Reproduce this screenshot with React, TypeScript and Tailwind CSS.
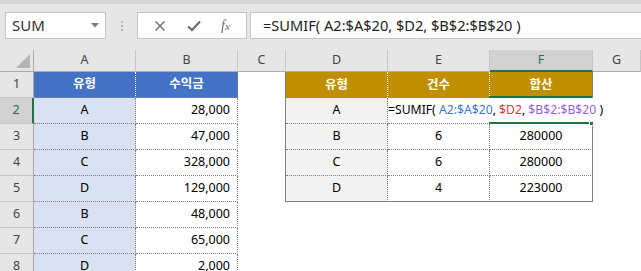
import React from 'react';

const FONT = { fontFamily: '"Noto Sans", "Noto Sans CJK KR", sans-serif' };

const colHeads = ['A', 'B', 'C', 'D', 'E', 'F', 'G'];

type Row = { a: string; b: string; d?: string; e?: string; f?: string };

const rows: Row[] = [
    { a: '유형', b: '수익금', d: '유형', e: '건수', f: '합산' },
    { a: 'A', b: '28,000', d: 'A', e: '', f: '' },
    { a: 'B', b: '47,000', d: 'B', e: '6', f: '280000' },
    { a: 'C', b: '328,000', d: 'C', e: '6', f: '280000' },
    { a: 'D', b: '129,000', d: 'D', e: '4', f: '223000' },
    { a: 'B', b: '48,000' },
    { a: 'C', b: '65,000' },
    { a: 'D', b: '2,000' },
];

const FxBar: React.FC = () => {
    return (
        <div className="h-[50px] bg-[#e6e6e6] border-t-[4px] border-[#d6d6d6] flex items-start pt-[8px]">
            {/* name box */}
            <div className="ml-[5px] w-[101px] h-[27px] bg-white border border-[#c6c6c6] flex items-center pl-[6px] pr-[6px]">
                <span className="text-[15px] text-[#333] flex-1">SUM</span>
                <svg width="8" height="5" viewBox="0 0 8 5">
                    <path d="M0 0 L8 0 L4 4.5 Z" fill="#7a7a7a" />
                </svg>
            </div>
            <div className="w-[31px] h-[27px] flex flex-col items-center justify-center gap-[2px]">
                <span className="w-[2px] h-[2px] bg-[#b5b5b5]" />
                <span className="w-[2px] h-[2px] bg-[#b5b5b5]" />
                <span className="w-[2px] h-[2px] bg-[#b5b5b5]" />
            </div>
            {/* x / check / fx */}
            <div className="w-[110px] h-[27px] bg-white border border-[#c6c6c6] flex items-center justify-around px-[6px]">
                <svg width="12" height="12" viewBox="0 0 12 12">
                    <path d="M1.5 1.5 L10.5 10.5 M10.5 1.5 L1.5 10.5" stroke="#6b6b6b" strokeWidth="1.4" />
                </svg>
                <svg width="14" height="12" viewBox="0 0 14 12">
                    <path d="M1 6.5 L5 10 L13 1.5" stroke="#6b6b6b" strokeWidth="2.2" fill="none" />
                </svg>
                <span className="text-[#6b6b6b] italic text-[14px] leading-none" style={{ fontFamily: '"Liberation Serif", serif' }}>
                    f<span className="text-[11px]">x</span>
                </span>
            </div>
            <div className="ml-[3px] flex-1 h-[27px] bg-white border border-[#c6c6c6] border-r-0 flex items-center pl-[12px]">
                <span className="text-[14.6px] text-[#222] whitespace-pre">=SUMIF( A2:$A$20, $D2, $B$2:$B$20 )</span>
            </div>
        </div>
    );
};

const Corner: React.FC = () => (
    <div className="bg-[#e6e6e6] border-r border-b border-[#ababab] flex items-end justify-end pr-[3px] pb-[3px]">
        <svg width="14" height="14" viewBox="0 0 14 14">
            <path d="M14 0 L14 14 L0 14 Z" fill="#b4b4b4" />
        </svg>
    </div>
);

const App: React.FC = () => {
    return (
        <div className="w-[641px] h-[271px] overflow-hidden bg-white relative" style={FONT}>
            <FxBar />

            <div className="grid grid-cols-[34px_102px_102px_48px_102px_102px_103px_1fr] grid-rows-[22px_repeat(8,26px)] text-[12.5px] text-black">
                {/* column headers */}
                <Corner />
                {colHeads.map((c) => (
                    <div
                        key={c}
                        className={
                            c === 'F'
                                ? 'bg-[#d2d2d2] text-[#217346] border-r border-[#c6c6c6] border-b-2 border-b-[#217346] flex items-center justify-center'
                                : 'bg-[#e6e6e6] text-[#444] border-r border-[#c6c6c6] border-b border-b-[#ababab] flex items-center justify-center'
                        }
                    >
                        {c}
                    </div>
                ))}

                {rows.map((r, i) => {
                    const n = i + 1;
                    const head = n === 1;
                    const inTable2 = n <= 5;
                    const last2 = n === 5;
                    return (
                        <React.Fragment key={n}>
                            <div
                                className={
                                    n === 2
                                        ? 'bg-[#d2d2d2] text-[#217346] border-b border-[#c6c6c6] border-r-2 border-r-[#217346] flex items-center justify-center'
                                        : 'bg-[#e6e6e6] text-[#444] border-b border-[#c6c6c6] border-r border-r-[#ababab] flex items-center justify-center'
                                }
                            >
                                {n}
                            </div>

                            {/* A */}
                            {head ? (
                                <div className="bg-[#4472c4] text-white font-bold border-r border-dotted border-r-white border-b border-b-[#8a8a8a] flex items-center justify-center">
                                    {r.a}
                                </div>
                            ) : (
                                <div className="bg-[#d9e1f2] border-r border-dotted border-r-[#7f7f7f] border-b border-b-[#7f7f7f] flex items-center justify-center">
                                    {r.a}
                                </div>
                            )}

                            {/* B */}
                            {head ? (
                                <div className="bg-[#4472c4] text-white font-bold border-r border-r-[#808080] border-b border-dotted border-b-[#8a8a8a] flex items-center justify-center">
                                    {r.b}
                                </div>
                            ) : (
                                <div className="bg-white border-r border-r-[#808080] border-b border-dotted border-b-[#7f7f7f] flex items-center justify-end pr-[7px]">
                                    {r.b}
                                </div>
                            )}

                            {/* C */}
                            <div className={inTable2 ? 'bg-white border-r border-r-[#808080]' : 'bg-white'} />

                            {/* D, E, F */}
                            {inTable2 ? (
                                head ? (
                                    <>
                                        <div className="bg-[#bf8f00] text-white font-bold border-r border-dotted border-r-white flex items-center justify-center">
                                            {r.d}
                                        </div>
                                        <div className="bg-[#bf8f00] text-white font-bold border-r border-dotted border-r-white flex items-center justify-center">
                                            {r.e}
                                        </div>
                                        <div className="bg-[#bf8f00] text-white font-bold border-r border-r-[#808080] flex items-center justify-center">
                                            {r.f}
                                        </div>
                                    </>
                                ) : (
                                    <>
                                        <div
                                            className={`bg-[#f2f2f2] border-r border-dotted border-r-[#7f7f7f] border-b border-b-[#7f7f7f] flex items-center justify-center ${last2 ? 'border-b-solid' : ''}`}
                                            style={last2 ? { borderBottomStyle: 'solid' } : undefined}
                                        >
                                            {r.d}
                                        </div>
                                        <div
                                            className="bg-white border-r border-dotted border-r-[#7f7f7f] border-b border-b-[#7f7f7f] flex items-center justify-center"
                                            style={last2 ? { borderBottomStyle: 'solid' } : undefined}
                                        >
                                            {r.e}
                                        </div>
                                        <div
                                            className="bg-white border-r border-r-[#808080] border-b border-dotted border-b-[#7f7f7f] flex items-center justify-center"
                                            style={{ borderRightStyle: 'solid', ...(last2 ? { borderBottomStyle: 'solid' } : {}) }}
                                        >
                                            {r.f}
                                        </div>
                                    </>
                                )
                            ) : (
                                <>
                                    <div />
                                    <div />
                                    <div />
                                </>
                            )}
                            <div />
                        </React.Fragment>
                    );
                })}
            </div>

            {/* active cell F2 in edit mode */}
            <div className="absolute left-[489px] top-[96px] w-[103px] h-[2px] bg-[#217346]" />
            <div className="absolute left-[388px] top-[98px] w-[216px] h-[24px] bg-white flex items-center text-[12.2px] whitespace-pre text-black">
                <span>=SUMIF( </span>
                <span className="text-[#3b78d6]">A2:$A$20</span>
                <span>, </span>
                <span className="text-[#e0353b]">$D2</span>
                <span>, </span>
                <span className="text-[#9a5fd2]">$B$2:$B$20</span>
                <span> )</span>
            </div>
            <div className="absolute left-[489px] top-[122px] w-[100px] h-[2px] bg-[#217346]" />
            <div className="absolute left-[589px] top-[121px] w-[5px] h-[5px] bg-[#217346] border border-white" />
        </div>
    );
};

export default App;
